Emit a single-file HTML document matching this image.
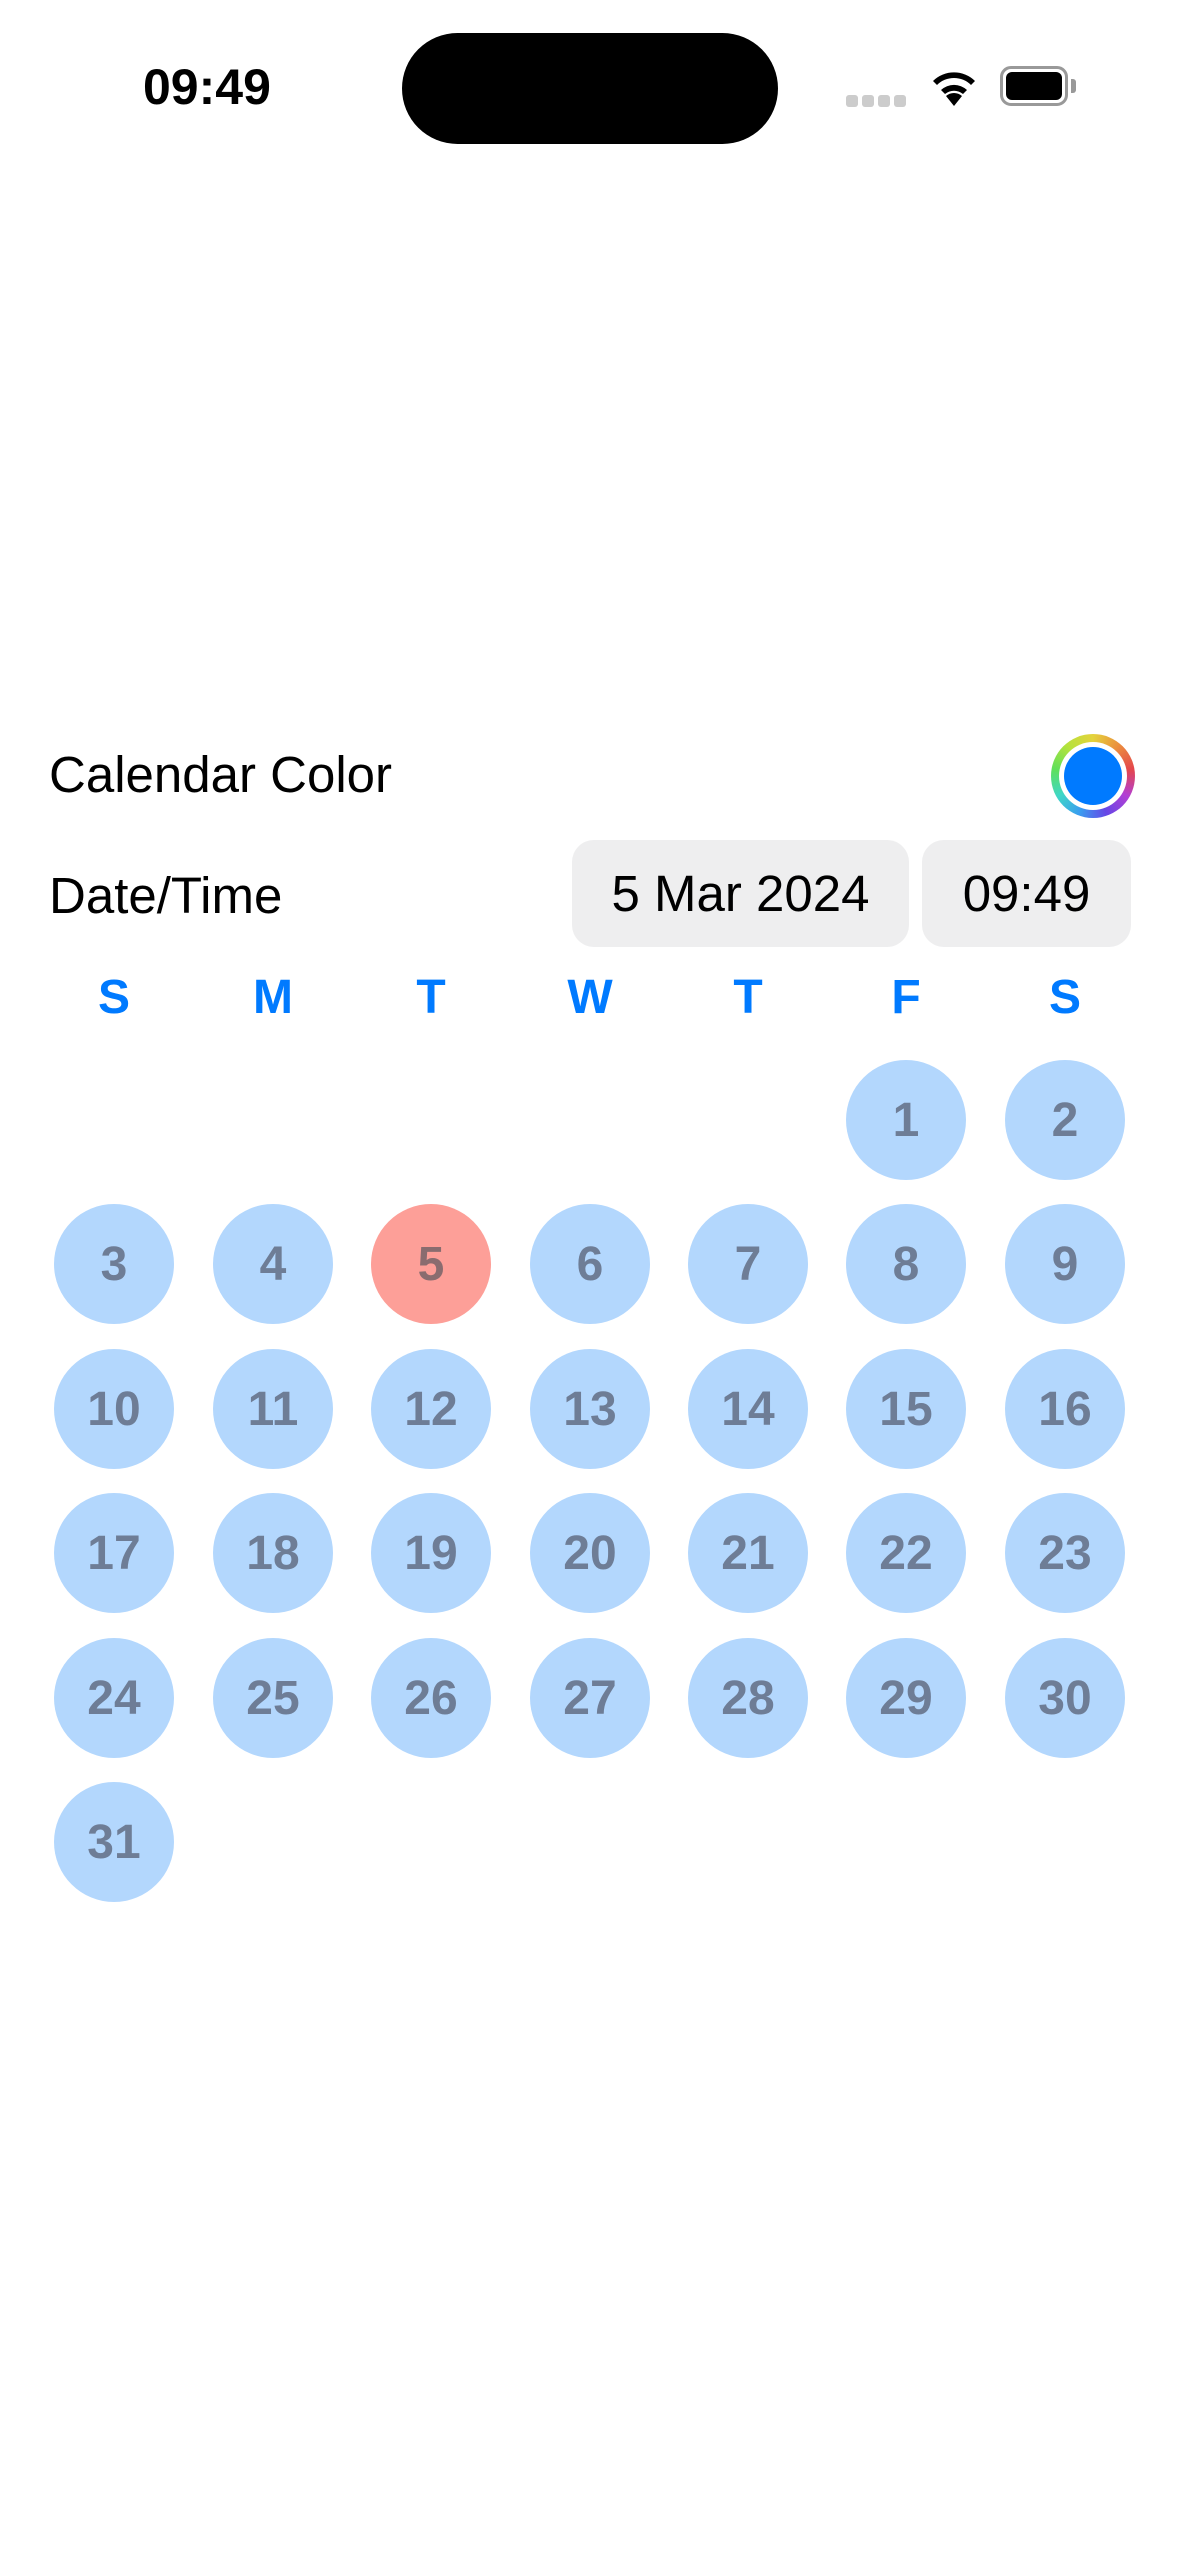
<!DOCTYPE html>
<html><head><meta charset="utf-8"><style>
*{margin:0;padding:0;box-sizing:border-box}
body{width:1179px;height:2556px;background:#fff;position:relative;overflow:hidden;font-family:"Liberation Sans",sans-serif}
.abs{position:absolute}
.lbl{font-size:51px;color:#000;line-height:1}
.pill{background:#eeeeef;border-radius:22px;font-size:51px;display:flex;align-items:center;justify-content:center}
.wd{position:absolute;width:100px;margin-left:-50px;text-align:center;font-weight:900;font-size:48px;color:#007aff;top:974px;line-height:48px}
.c{position:absolute;width:120px;height:120px;margin:-60px 0 0 -60px;border-radius:50%;background:#b3d7fd;color:#6e7d96;font-weight:bold;font-size:48px;display:flex;align-items:center;justify-content:center}
.t{background:#fd9f98;color:#8a6c6f}
</style></head><body>
<div class="abs" style="left:143px;top:62px;font-size:50px;font-weight:bold;line-height:50px">09:49</div>
<div class="abs" style="left:402px;top:33px;width:376px;height:111px;border-radius:56px;background:#000"></div>
<div class="abs" style="left:846px;top:95px;width:60px;height:12px;display:flex;gap:4px">
<span style="flex:1;background:#ccc;border-radius:3px"></span><span style="flex:1;background:#ccc;border-radius:3px"></span><span style="flex:1;background:#ccc;border-radius:3px"></span><span style="flex:1;background:#ccc;border-radius:3px"></span></div>
<svg class="abs" style="left:928px;top:64px" width="52" height="44" viewBox="0 0 52 44"><path d="M26 42 L18 32 A12 12 0 0 1 34 32Z M13 26 A19 19 0 0 1 39 26 L35 30 A14 14 0 0 0 17 30Z M5 17 A30 30 0 0 1 47 17 L43 21 A24 24 0 0 0 9 21Z" fill="#000"/></svg>
<div class="abs" style="left:1000px;top:66px;width:68px;height:40px;border:3px solid #999;border-radius:11px;padding:3px"><div style="width:100%;height:100%;background:#000;border-radius:6px"></div></div>
<div class="abs" style="left:1071px;top:79px;width:5px;height:14px;background:#999;border-radius:0 3px 3px 0"></div>

<div class="abs lbl" style="left:49px;top:749px">Calendar Color</div>
<div class="abs" style="left:1051px;top:734px;width:84px;height:84px;border-radius:50%;background:conic-gradient(#e4d33c,#eb8e3d,#e4464c,#b33fd4,#6646e6,#3a9df0,#3fd7c7,#5fe05a,#b6e23c,#e4d33c)"></div>
<div class="abs" style="left:1059px;top:742px;width:68px;height:68px;border-radius:50%;background:#fff"></div>
<div class="abs" style="left:1064px;top:747px;width:58px;height:58px;border-radius:50%;background:#007aff"></div>

<div class="abs lbl" style="left:49px;top:870px">Date/Time</div>
<div class="abs pill" style="left:572px;top:840px;width:337px;height:107px">5 Mar 2024</div>
<div class="abs pill" style="left:922px;top:840px;width:209px;height:107px">09:49</div>

<div class="wd" style="left:114px">S</div><div class="wd" style="left:273px">M</div><div class="wd" style="left:431px">T</div><div class="wd" style="left:590px">W</div><div class="wd" style="left:748px">T</div><div class="wd" style="left:906px">F</div><div class="wd" style="left:1065px">S</div>

<div id="g"></div>
<script>
var xs=[114,273,431,590,748,906,1065],ys=[1120,1264,1409,1553,1698,1842],h='';
for(var d=1;d<=31;d++){var i=d+4,r=Math.floor(i/7),c=i%7;
h+='<div class="c'+(d==5?' t':'')+'" style="left:'+xs[c]+'px;top:'+ys[r]+'px">'+d+'</div>';}
document.getElementById('g').innerHTML=h;
</script>
</body></html>
